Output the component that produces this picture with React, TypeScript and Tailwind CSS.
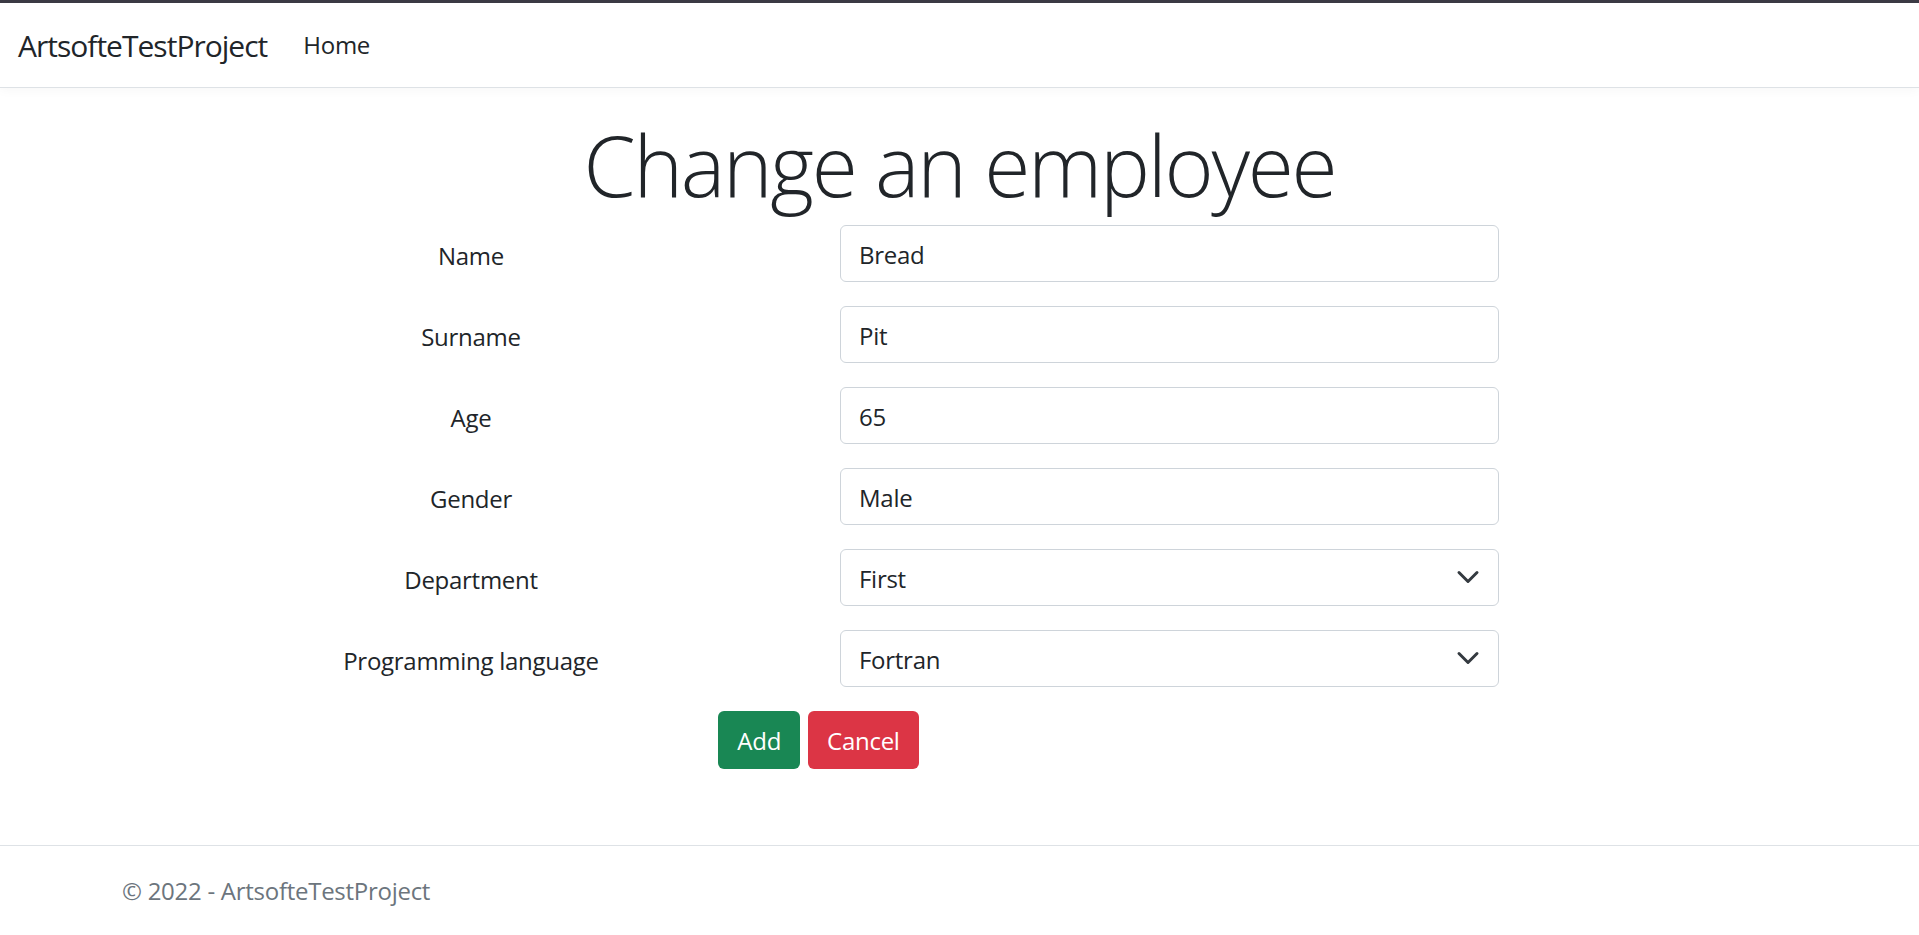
import React from "react";

const font = { fontFamily: '"Open Sans", "Noto Sans", "Liberation Sans", sans-serif' };

function Chevron() {
  return (
    <svg width="24" height="24" viewBox="0 0 16 16" fill="none" stroke="#343a40" strokeWidth="2" strokeLinecap="round" strokeLinejoin="round">
      <path d="M2 5l6 6 6-6" />
    </svg>
  );
}

const rows: { label: string; value: string; select?: boolean }[] = [
  { label: "Name", value: "Bread" },
  { label: "Surname", value: "Pit" },
  { label: "Age", value: "65" },
  { label: "Gender", value: "Male" },
  { label: "Department", value: "First", select: true },
  { label: "Programming language", value: "Fortran", select: true },
];

export default function App() {
  return (
    <div className="min-h-screen flex flex-col bg-white text-[#212529] tracking-[-0.017em]" style={font}>
      <div className="h-[3px] bg-[#3c3b45]" />
      <nav className="h-[85px] border-b border-[#dee2e6] shadow-[0_3px_10px_rgba(0,0,0,0.03)] flex items-center px-[18px]">
        <span className="text-[30px] mr-[24px] leading-[1.5] tracking-[-0.033em]">ArtsofteTestProject</span>
        <a className="px-[12px] text-[24px] leading-[1.5]">Home</a>
      </nav>
      <main className="flex-1 pt-[24px]">
        <h1 className="text-center text-[84px] font-light leading-[1.2] pt-[3px] mb-[9px] tracking-[-0.027em]">Change an employee</h1>
        <form className="ml-[120px] w-[1397px]">
          {rows.map((r) => (
            <div key={r.label} className="grid grid-cols-[702px_695px] items-center mb-[24px]">
              <div className="text-center text-[24px] leading-[1.5] pt-[5px]">{r.label}</div>
              <div className="px-[18px]">
                <div className="h-[57px] border border-[#ced4da] rounded-[6px] pl-[18px] pr-[18px] pt-[4px] flex items-center justify-between text-[24px]">
                  <span>{r.value}</span>
                  {r.select && <span className="-mt-[4px] flex"><Chevron /></span>}
                </div>
              </div>
            </div>
          ))}
          <div className="flex justify-center gap-[8px]">
            <button type="button" className="h-[58px] px-[19px] pt-[2px] rounded-[6px] bg-[#198754] text-white text-[24px] leading-[1.5]">Add</button>
            <button type="button" className="h-[58px] px-[19px] pt-[2px] rounded-[6px] bg-[#dc3545] text-white text-[24px] leading-[1.5]">Cancel</button>
          </div>
        </form>
      </main>
      <footer className="h-[90px] border-t border-[#dee2e6] flex items-center">
        <div className="ml-[122px] text-[24px] text-[#6c757d]">© 2022 - ArtsofteTestProject</div>
      </footer>
    </div>
  );
}
